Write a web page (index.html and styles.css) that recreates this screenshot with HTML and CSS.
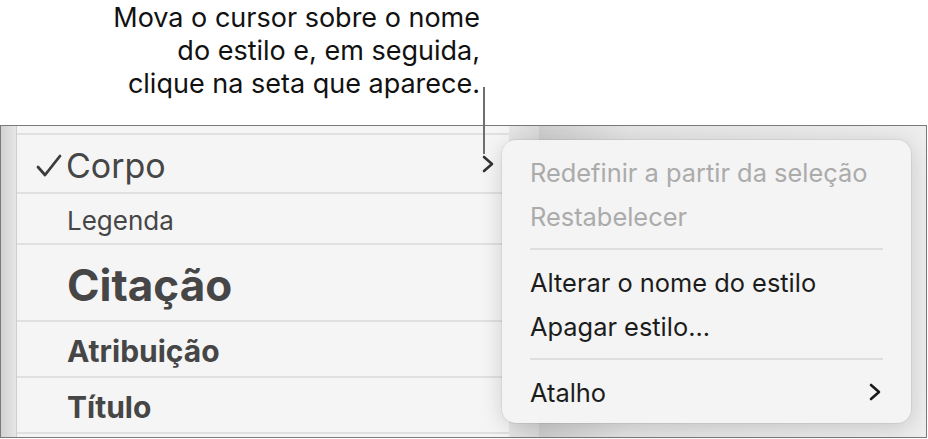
FILE: index.html
```html
<!DOCTYPE html>
<html lang="pt">

<head>
    <meta charset="UTF-8">
    <meta name="viewport" content="width=device-width, initial-scale=1.0">
    <title>Estilos de parágrafo</title>
    <link rel="stylesheet" href="styles.css">
</head>

<body>
    <div class="page">
        <div class="callout">
            <p>Mova o cursor sobre o nome<br>do estilo e, em seguida,<br>clique na seta que aparece.</p>
        </div>

        <div class="window">
            <div class="strip"></div>
            <ul class="styles">
                <li class="row row-top"></li>
                <li class="row row-corpo">
                    <svg class="check" width="26" height="24" viewBox="0 0 26 24">
                        <polyline points="2,13 9,21 24,2" fill="none" stroke="#3c3c3c" stroke-width="2.8" stroke-linecap="round" stroke-linejoin="round"/>
                    </svg>
                    <span class="name">Corpo</span>
                    <svg class="chevron" width="12" height="18" viewBox="0 0 12 18">
                        <polyline points="2,2 10,9 2,16" fill="none" stroke="#333" stroke-width="2.6" stroke-linecap="round" stroke-linejoin="round"/>
                    </svg>
                </li>
                <li class="row row-legenda"><span class="name">Legenda</span></li>
                <li class="row row-citacao"><span class="name">Citação</span></li>
                <li class="row row-atrib"><span class="name">Atribuição</span></li>
                <li class="row row-titulo"><span class="name">Título</span></li>
            </ul>
            <div class="gutter"></div>
            <div class="canvas"></div>
        </div>

        <div class="pointer"></div>

        <div class="menu">
            <div class="menu-item disabled">Redefinir a partir da seleção</div>
            <div class="menu-item disabled">Restabelecer</div>
            <div class="menu-sep"></div>
            <div class="menu-item">Alterar o nome do estilo</div>
            <div class="menu-item">Apagar estilo...</div>
            <div class="menu-sep"></div>
            <div class="menu-item">
                <span>Atalho</span>
                <svg class="chevron" width="12" height="18" viewBox="0 0 12 18">
                    <polyline points="2,2 10,9 2,16" fill="none" stroke="#1a1a1a" stroke-width="2.6" stroke-linecap="round" stroke-linejoin="round"/>
                </svg>
            </div>
        </div>
    </div>
</body>

</html>
```

FILE: styles.css
```css
body {
    margin: 0;
    background: #fff;
    font-family: Inter, "Liberation Sans", sans-serif;
}

.page {
    position: relative;
    width: 928px;
    height: 439px;
    overflow: hidden;
}

.callout {
    height: 125px;
    width: 480px;
    text-align: right;
}

.callout p {
    margin: 0;
    padding-top: 1px;
    font-size: 27px;
    line-height: 33px;
    color: #111;
}

.window {
    display: flex;
    width: 925px;
    height: 311px;
    border: 1px solid #7a7a7a;
}

.strip {
    width: 15px;
    background: linear-gradient(to right, #d2d2d2, #e6e6e6);
    border-right: 1px solid #cfcfcf;
}

.styles {
    width: 492px;
    margin: 0;
    padding: 0;
    list-style: none;
    background: #f5f5f5;
}

.row {
    display: flex;
    align-items: center;
    padding: 4px 0 0 50px;
    border-bottom: 2px solid #e0e0e0;
    color: #464646;
}

.row-top {
    height: 3px;
}

.row-corpo {
    position: relative;
    height: 53px;
    padding-left: 19px;
}

.row-corpo .name {
    margin-left: 4px;
    font-size: 34px;
}

.row-legenda {
    height: 45px;
    font-size: 26px;
}

.row-citacao {
    height: 71px;
    font-size: 44px;
    font-weight: 700;
}

.row-atrib {
    height: 50px;
    font-size: 30px;
    font-weight: 700;
}

.row-titulo {
    height: 50px;
    font-size: 30px;
    font-weight: 700;
}

.check {
    margin-top: 0;
}

.row-corpo .chevron {
    margin: 0 15px 4px auto;
}

.gutter {
    width: 30px;
    background: linear-gradient(to right, #e6e6e6, #dadada);
}

.canvas {
    flex: 1;
    background: linear-gradient(to right, #cecece, #e4e4e4 90px, #ededed);
}

.pointer {
    position: absolute;
    left: 483px;
    top: 87px;
    width: 2px;
    height: 67px;
    background: #6e6e6e;
}

.menu {
    position: absolute;
    left: 502px;
    top: 140px;
    width: 409px;
    height: 283px;
    box-sizing: border-box;
    padding: 10px 0 9px;
    background: #f4f4f4;
    border-radius: 14px;
    box-shadow: 0 0 0 1px rgba(0, 0, 0, 0.05), 0 4px 22px rgba(0, 0, 0, 0.16);
}

.menu-item {
    display: flex;
    align-items: center;
    justify-content: space-between;
    height: 44px;
    padding: 0 30px 0 28px;
    font-size: 25.4px;
    color: #1c1c1c;
}

.menu-item.disabled {
    color: #ababab;
}

.menu-sep {
    height: 2px;
    margin: 10px 28px;
    background: #dedede;
}
```
